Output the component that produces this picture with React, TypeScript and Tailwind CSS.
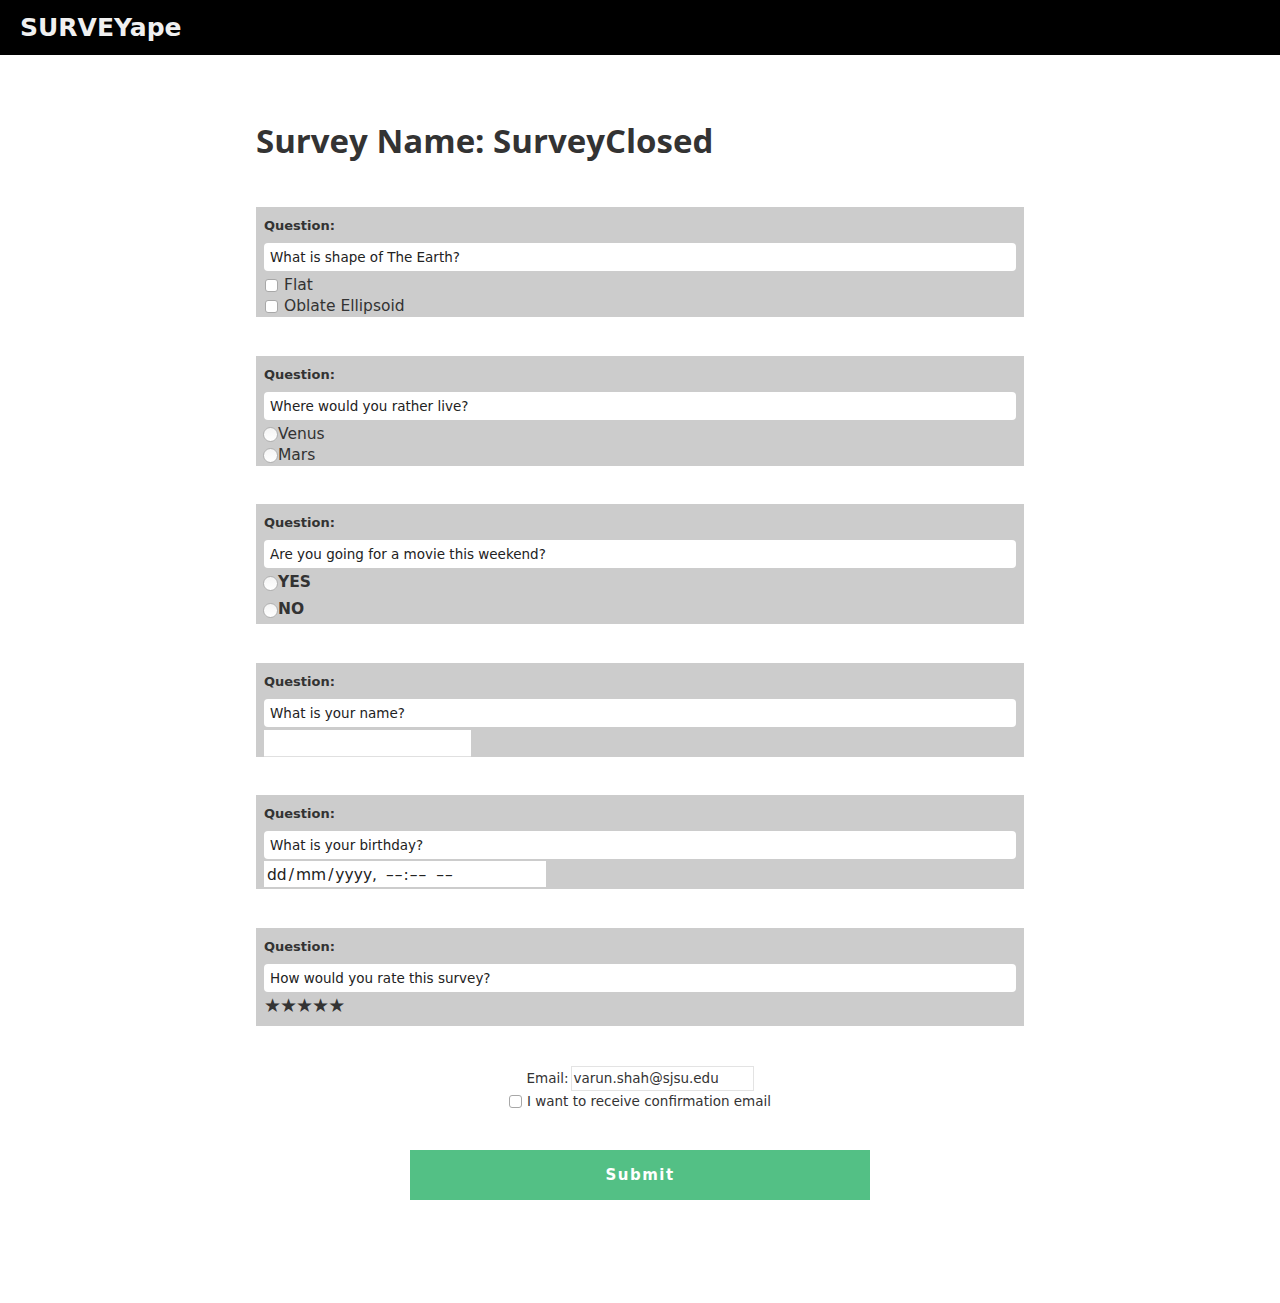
import React from "react";

const font = { fontFamily: '"DejaVu Sans", "Liberation Sans", sans-serif' };
const titleFont = { fontFamily: '"Open Sans", "DejaVu Sans", sans-serif' };

function Check() {
  return <span className="inline-block w-[13px] h-[13px] bg-white border border-[#a8a8a8] rounded-[3px] shrink-0" />;
}
function Radio() {
  return <span className="inline-block w-[15px] h-[15px] bg-gradient-to-b from-[#f4f4f4] to-white border border-[#b0b0b0] rounded-full shrink-0" />;
}

function Card({ q, children, className = "" }: { q: string; children?: React.ReactNode; className?: string }) {
  return (
    <div className={"bg-[#cccccc] px-2 w-[768px] " + className}>
      <div className="pt-[9px] h-[36px] text-[13px] leading-[20px] font-bold text-[#333]">Question:</div>
      <div className="bg-white rounded-[4px] h-[28px] px-[6px] flex items-center text-[13.5px] text-[#222]">{q}</div>
      {children}
    </div>
  );
}

export default function App() {
  return (
    <div style={font} className="min-h-[1303px] bg-white text-[#333]">
      <div className="h-[55px] bg-black flex items-center px-5">
        <span className="text-[25px] font-bold text-[#f0f0f0]">SURVEYape</span>
      </div>
      <div className="w-[768px] mx-auto">
        <h1 style={titleFont} className="mt-[64px] h-[44px] text-[33px] leading-[44px] font-bold text-[#333]">Survey Name: SurveyClosed</h1>
        <Card q="What is shape of The Earth?" className="mt-[44px]">
          <div className="pt-[4px]">
            <div className="h-[21px] flex items-center gap-[6px] text-[15.5px] pl-[1px]"><Check />Flat</div>
            <div className="h-[21px] flex items-center gap-[6px] text-[15.5px] pl-[1px]"><Check />Oblate Ellipsoid</div>
          </div>
        </Card>
        <Card q="Where would you rather live?" className="mt-[39px]">
          <div className="pt-[4px]">
            <div className="h-[21px] flex items-center text-[15.5px] -ml-[1px]"><Radio />Venus</div>
            <div className="h-[21px] flex items-center text-[15.5px] -ml-[1px]"><Radio />Mars</div>
          </div>
        </Card>
        <Card q="Are you going for a movie this weekend?" className="mt-[38px]">
          <div className="pt-[4px] pb-[3px]">
            <div className="h-[22px] flex items-center text-[15.5px] font-bold -ml-[1px]"><Radio />YES</div>
            <div className="h-[22px] mt-[5px] flex items-center text-[15.5px] font-bold -ml-[1px]"><Radio />NO</div>
          </div>
        </Card>
        <Card q="What is your name?" className="mt-[39px]">
          <div className="pt-[3px]">
            <div className="w-[207px] h-[27px] bg-white border-b border-[#e0e0e0]" />
          </div>
        </Card>
        <Card q="What is your birthday?" className="mt-[38px]">
          <div className="pt-[2px] pb-[2px]">
            <div className="w-[282px] h-[26px] bg-white flex items-center px-[3px] pt-[3px] text-[15.5px] text-[#222]">
              <span>dd</span><span className="mx-[2px]">/</span><span>mm</span><span className="mx-[2px]">/</span><span>yyyy,</span>
              <span className="ml-[9px] tracking-[1px]">––:––</span><span className="ml-[9px] tracking-[1px]">––</span>
            </div>
          </div>
        </Card>
        <Card q="How would you rate this survey?" className="mt-[39px]">
          <div className="h-[34px] pt-[1px] text-[19px] leading-[24px] text-[#333] tracking-[-1px]">★★★★★</div>
        </Card>
        <div className="mt-[40px] flex flex-col items-center">
          <div className="flex items-center h-[25px] text-[13.5px]">
            <span className="mr-[2px]">Email:</span>
            <span className="w-[183px] h-[25px] border border-[#e3e3e3] flex items-center px-[2px] text-[13.5px]">varun.shah@sjsu.edu</span>
          </div>
          <div className="flex items-center gap-[5px] h-[22px] text-[13.5px] mt-[-1px]">
            <Check />I want to receive confirmation email
          </div>
          <button className="mt-[38px] w-[460px] h-[50px] bg-[#53c085] text-white font-bold text-[15px] tracking-[1.5px]">Submit</button>
        </div>
      </div>
    </div>
  );
}
